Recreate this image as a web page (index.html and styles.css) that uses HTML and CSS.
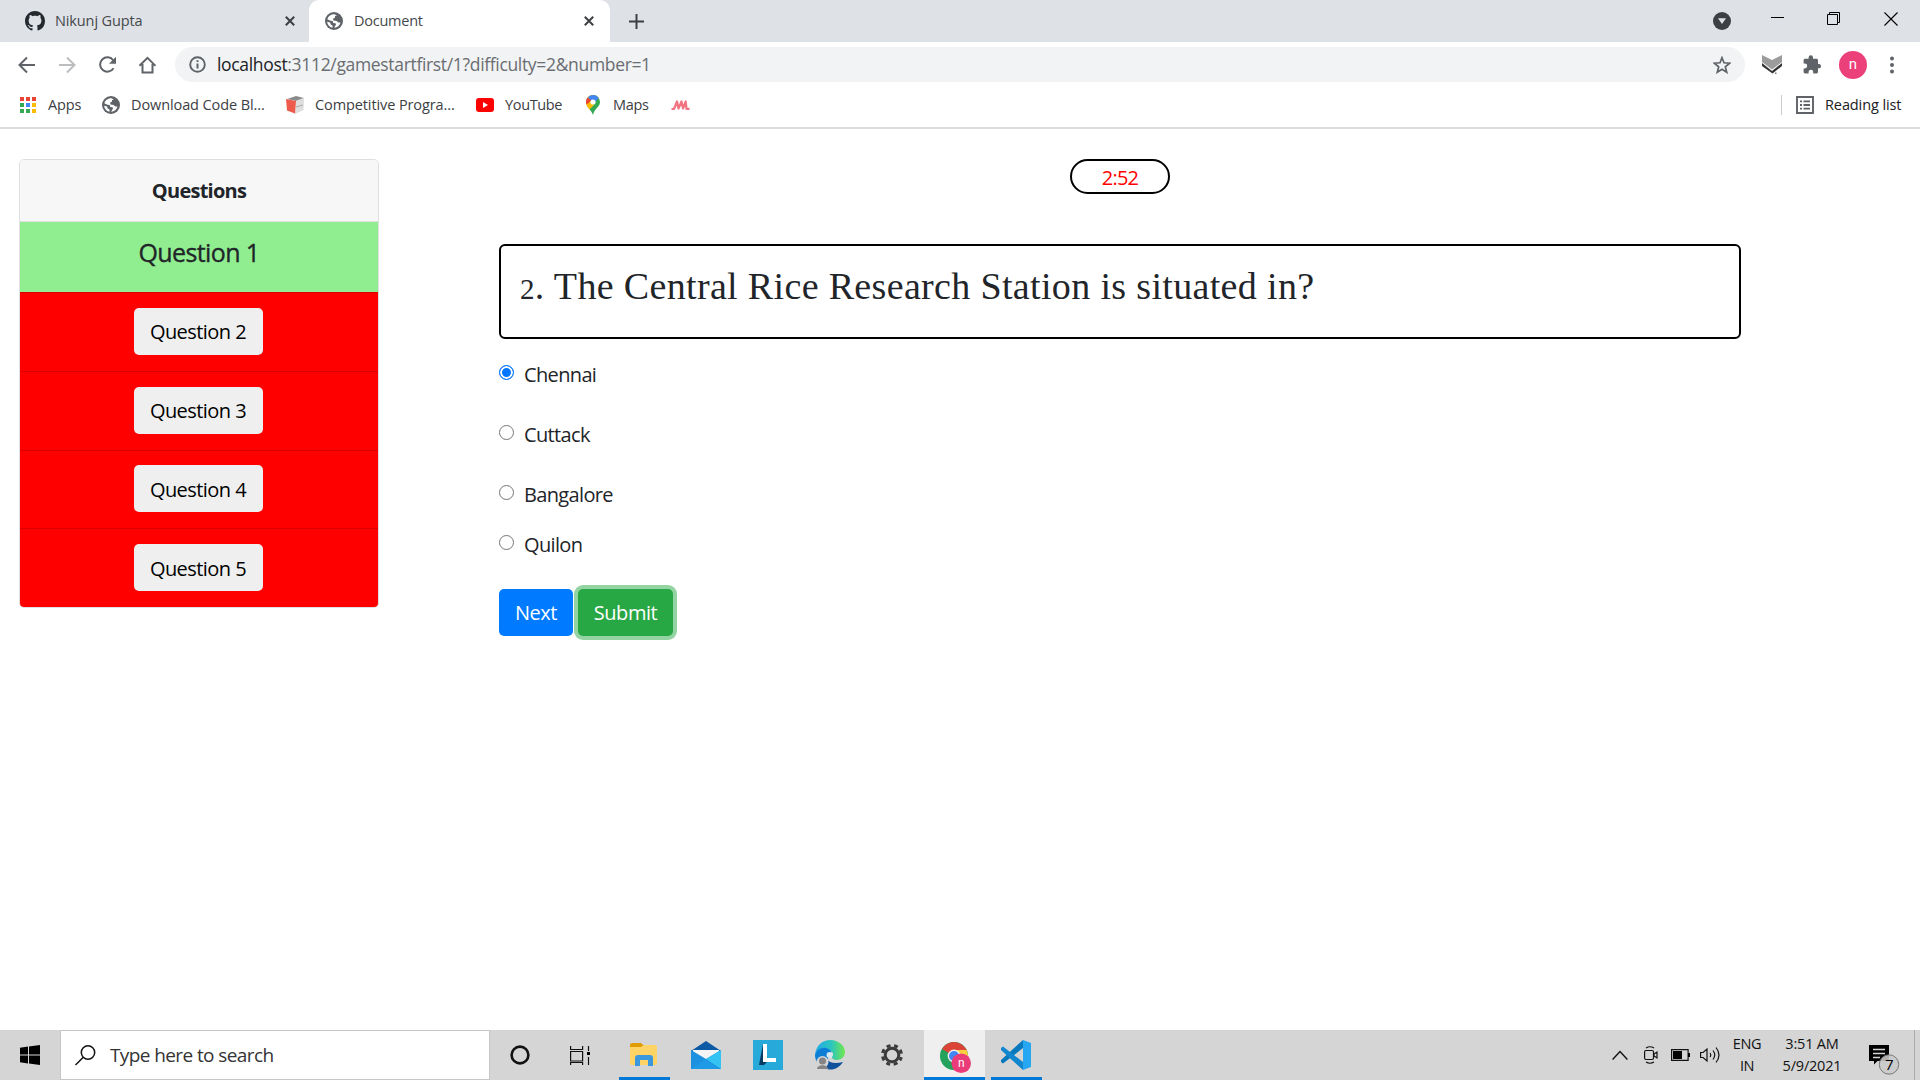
FILE: index.html
```html
<!DOCTYPE html>
<html lang="en">
<head>
<meta charset="utf-8">
<title>Document</title>
<link rel="stylesheet" href="styles.css">
</head>
<body>
<svg class="defs" width="0" height="0">
  <symbol id="globe" viewBox="0 0 18 18"><circle cx="9" cy="9" r="9" fill="#5f6368"/><path d="M8 2.2C5 3 3 4.500 2.300 7.300l3.200 1.500 2.200.2.600 1.900 2.200.4.500 1.300-1.900 3.200c3.400-.3 5.700-2.500 6.400-5.400l-2.200.2-1.700-1.600-3.100-.6-.4-1.900 1.800-.7.200-1.700 1.800-.5C11 2.700 9.500 2.100 8 2.200zM2.100 9.700c.2 2.800 2.400 5.300 5.300 6l.3-1.900-2-1.400-.6-1.800z" fill="#fff"/></symbol>
  <symbol id="cross" viewBox="0 0 10 10"><path d="M.8.8l8.400 8.400M9.200.8L.8 9.200" stroke="#3c4043" stroke-width="2"/></symbol>
</svg>

<header class="browser">
  <div class="tabs">
    <div class="tab tab-idle">
      <svg class="github" width="20" height="20" viewBox="0 0 16 16"><path fill="#24292e" d="M8 0C3.580 0 0 3.580 0 8c0 3.540 2.290 6.530 5.470 7.590.4.070.55-.17.55-.38 0-.19-.01-.82-.01-1.490-2.010.37-2.530-.49-2.690-.94-.09-.23-.48-.94-.82-1.130-.28-.15-.68-.52-.01-.53.63-.01 1.080.58 1.230.82.72 1.210 1.870.87 2.330.66.070-.52.28-.87.51-1.070-1.780-.2-3.640-.89-3.640-3.950 0-.87.31-1.590.82-2.150-.08-.2-.36-1.020.08-2.120 0 0 .67-.21 2.200.82.64-.18 1.320-.27 2-.27s1.360.09 2 .27c1.530-1.040 2.200-.82 2.200-.82.44 1.100.16 1.920.08 2.120.51.56.82 1.270.82 2.150 0 3.070-1.870 3.750-3.650 3.950.29.25.54.73.54 1.480 0 1.070-.01 1.930-.01 2.200 0 .21.15.46.55.38A8.010 8.010 0 0016 8c0-4.420-3.580-8-8-8z"/></svg>
      <span class="tab-title tab-title-github">Nikunj Gupta</span>
      <svg width="10" height="10"><use href="#cross"/></svg>
    </div>
    <div class="tab tab-active">
      <svg width="18" height="18"><use href="#globe"/></svg>
      <span class="tab-title">Document</span>
      <svg width="10" height="10"><use href="#cross"/></svg>
    </div>
    <svg class="new-tab" width="15" height="15" viewBox="0 0 15 15"><path d="M7.500 0v15M0 7.500h15" stroke="#3c4043" stroke-width="2"/></svg>
    <div class="window-controls">
      <svg width="18" height="18" viewBox="0 0 18 18"><circle cx="9" cy="9" r="9" fill="#3c4043"/><path d="M5 6.200h8L9 12z" fill="#dee1e6"/></svg>
      <svg class="minimize" width="13" height="13" viewBox="0 0 13 13"><path d="M0 5.500h13" stroke="#000"/></svg>
      <svg class="restore" width="13" height="13" viewBox="0 0 13 13"><path d="M.5 2.500h10v10H.5zM2.500 2.500v-2h10v10h-2" fill="none" stroke="#000"/></svg>
      <svg class="close" width="14" height="14" viewBox="0 0 14 14"><path d="M.5.5l13 13M13.500.5l-13 13" stroke="#000" stroke-width="1.100"/></svg>
    </div>
  </div>

  <div class="toolbar">
    <div class="nav">
      <svg width="18" height="18" viewBox="0 0 18 18"><path d="M17 9H2M9 1.500L1.500 9 9 16.500" fill="none" stroke="#5f6368" stroke-width="2"/></svg>
      <svg width="18" height="18" viewBox="0 0 18 18"><path d="M1 9h15M9 1.500L16.500 9 9 16.500" fill="none" stroke="#bbbdbf" stroke-width="2"/></svg>
      <svg width="18" height="18" viewBox="0 0 18 18"><path d="M15.500 12.200A7.200 7.200 0 1 1 15.300 4.500" fill="none" stroke="#5f6368" stroke-width="2"/><path d="M18 .8v7h-7z" fill="#5f6368"/></svg>
      <svg width="18" height="18" viewBox="0 0 18 18"><path d="M1.500 9.800L9.500 1.800l8 8M4.500 8v8.500h10V8" fill="none" stroke="#5f6368" stroke-width="2"/></svg>
    </div>
    <div class="omnibox">
      <svg width="17" height="17" viewBox="0 0 17 17"><circle cx="8.500" cy="8.500" r="7.300" fill="none" stroke="#5f6368" stroke-width="1.900"/><path d="M8.500 7.400v5M8.500 4.200v1.900" stroke="#5f6368" stroke-width="2"/></svg>
      <span class="url"><b>localhost</b>:3112/gamestartfirst/1?difficulty=2&amp;number=1</span>
      <svg width="18" height="18" viewBox="0 0 18 18"><path d="M9 1.700l2 5.100 5.600.4-4.300 3.600 1.400 5.400L9 13.200l-4.700 3 1.400-5.400L1.400 7.200 7 6.800z" fill="none" stroke="#5f6368" stroke-width="1.700"/></svg>
    </div>
    <svg class="extension" width="20" height="20" viewBox="0 0 20 20"><path d="M0 8l10 8L20 8v3l-9.500 7.500L0 11z" fill="#333"/><path d="M0 0l10 5 10-5v7l-10 7.500L0 7z" fill="#9c9c9c"/><path d="M13 17.500h1.500V19H13z" fill="#777"/></svg>
    <svg class="puzzle" width="19" height="19" viewBox="0 0 19 19"><path fill="#5f6368" d="M16.300 9H15V5.300C15 4.300 14.400 3.700 13.500 3.700H10V2.400a2.200 2.200 0 0 0-4.400 0v1.300H2.200C1.300 3.700.6 4.400.6 5.300v3.300h1.200a2.400 2.400 0 0 1 0 4.800H.6v3.400c0 .9.700 1.600 1.600 1.600h3.400v-1.300a2.300 2.300 0 0 1 4.600 0v1.300h3.300c.9 0 1.500-.7 1.500-1.600v-3.500h1.300A2.200 2.200 0 0 0 16.300 9z"/></svg>
    <span class="avatar">n</span>
    <svg class="dots" width="4" height="18" viewBox="0 0 4 18"><g fill="#5f6368"><circle cx="2" cy="2.500" r="2"/><circle cx="2" cy="9" r="2"/><circle cx="2" cy="15.500" r="2"/></g></svg>
  </div>

  <nav class="bookmarks">
    <span class="bookmark bm-apps"><svg width="16" height="16" viewBox="0 0 16 16"><path fill="#ea4335" d="M0 0h4v4H0zM6 0h4v4H6zM12 0h4v4h-4z"/><path fill="#34a853" d="M0 6h4v4H0zM0 12h4v4H0zM6 12h4v4H6z"/><path fill="#4285f4" d="M6 6h4v4H6z"/><path fill="#fbbc04" d="M12 6h4v4h-4zM12 12h4v4h-4z"/></svg>Apps</span>
    <span class="bookmark bm-code"><svg width="18" height="18"><use href="#globe"/></svg>Download Code Bl...</span>
    <span class="bookmark bm-prog"><svg width="18" height="18" viewBox="0 0 18 18"><path d="M1 3l9-3 8 2-8 3z" fill="#8b8b8b"/><path d="M10 5l8-3-.500 12L9 18z" fill="#dedede"/><path d="M0 3l10 2-1 12.500L1 14.500z" fill="#ee5b4d"/><path d="M10 11l7-2" stroke="#aaa"/></svg>Competitive Progra...</span>
    <span class="bookmark bm-tube"><svg width="18" height="14" viewBox="0 0 18 14"><rect width="18" height="14" rx="3" fill="#f00"/><path d="M7 4l5 3-5 3z" fill="#fff"/></svg>YouTube</span>
    <span class="bookmark bm-maps"><svg width="14" height="20" viewBox="0 0 14 20"><path d="M7 0a7 7 0 0 1 7 7c0 5-5.500 6-7 13C5.500 15 0 12 0 7a7 7 0 0 1 7-7z" fill="#34a853"/><path d="M1.300 11L12.800 3A7 7 0 0 0 2 2.200L0 7c0 1.500.5 2.800 1.300 4z" fill="#fbbc04"/><path d="M2 2.200A7 7 0 0 1 12.800 3L7 9z" fill="#4285f4"/><path d="M1.700 2.500L7 7l-4.500 3.500L.3 9C-.5 6.500.3 4 1.700 2.500z" fill="#ea4335"/><path d="M.5 9.500L5 6l3 4-4.600 4.400C2 12.800.9 11.200.5 9.500z" fill="#fbbc04"/><circle cx="7" cy="7" r="2.600" fill="#fff"/></svg>Maps</span>
    <svg width="19" height="12" viewBox="0 0 19 12"><path d="M.5 10h2.500L6 2.500 7.500 9.500 10.500 2.500 12 9.500 14.700 2.500 15.500 9.800H18.500" fill="none" stroke="#f27480" stroke-width="2.200" stroke-linejoin="round"/></svg>
    <span class="reading"><svg width="18" height="18" viewBox="0 0 18 18"><path d="M1 1h16v16H1z" fill="none" stroke="#5f6368" stroke-width="1.900"/><path d="M4 5.300h2M7.500 5.300H14M4 9h2M7.500 9H14M4 12.700h2M7.500 12.700H14" stroke="#5f6368" stroke-width="1.800"/></svg>Reading list</span>
  </nav>
</header>

<main class="page">
  <aside class="card">
    <div class="card-header">Questions</div>
    <div class="row row-done">Question 1</div>
    <div class="row"><button class="question-btn">Question 2</button></div>
    <div class="row"><button class="question-btn">Question 3</button></div>
    <div class="row"><button class="question-btn">Question 4</button></div>
    <div class="row"><button class="question-btn">Question 5</button></div>
  </aside>
  <section class="quiz">
    <div class="timer">2:52</div>
    <h3 class="prompt"><span class="oldstyle">2</span>. The Central Rice Research Station is situated in?</h3>
    <div class="options">
      <label class="option"><i class="radio checked"></i>Chennai</label>
      <label class="option"><i class="radio"></i>Cuttack</label>
      <label class="option option-tight"><i class="radio"></i>Bangalore</label>
      <label class="option"><i class="radio"></i>Quilon</label>
    </div>
    <div class="actions">
      <button class="btn btn-next">Next</button>
      <button class="btn btn-submit">Submit</button>
    </div>
  </section>
</main>

<footer class="taskbar">
  <div class="start"><svg width="20" height="20" viewBox="0 0 20 20"><path d="M0 2.800L8 1.600v7.900H0zM9 1.500L20 0v9.500H9zM0 10.500h8v7.900l-8-1.200zM9 10.500h11V20L9 18.500z"/></svg></div>
  <div class="search">
    <svg width="21" height="21" viewBox="0 0 21 21"><circle cx="13" cy="7.500" r="6.700" fill="none" stroke="#111" stroke-width="1.500"/><path d="M8.300 12.300L.5 20" stroke="#111" stroke-width="1.500"/></svg>
    <span>Type here to search</span>
  </div>
  <div class="apps">
    <div class="app w60"><svg width="20" height="20" viewBox="0 0 20 20"><circle cx="10" cy="10" r="8.400" fill="none" stroke="#111" stroke-width="2.600"/></svg></div>
    <div class="app w60"><svg width="20" height="19" viewBox="0 0 20 19"><path d="M.6 0v3.500h12V0M.6 5.500h12v9.500H.6zM.6 19v-2.500h12V19M18.500 0v5M18.500 11v8" fill="none" stroke="#111" stroke-width="1.200"/><path d="M17 6h3v3h-3z"/></svg></div>
    <div class="app w69"><div class="underlined"><svg width="28" height="24" viewBox="0 0 28 24"><path d="M0 2a2 2 0 0 1 2-2h9l3 3-2 3H0z" fill="#e09c00"/><path d="M0 4h11l3-2h11a2 2 0 0 1 2 2v16a2 2 0 0 1-2 2H2a2 2 0 0 1-2-2z" fill="#ffd366"/><path d="M5 23V15a3 3 0 0 1 3-3h12a3 3 0 0 1 3 3v8h-5v-6h-8v6z" fill="#3c98dc"/></svg></div></div>
    <div class="app mail"><svg width="30" height="28" viewBox="0 0 30 28"><path d="M0 10L15 0l15 10v3H0z" fill="#0c59a4"/><path d="M2 9h26v12H2z" fill="#f5f5f5"/><path d="M0 9l15 9 15-9v19H0z" fill="#1d90df"/><path d="M15 18l15-9v19z" fill="#35c3f3"/><path d="M15 18l13 10H0z" fill="#1e9ae6"/></svg></div>
    <div class="app w69"><svg width="30" height="30" viewBox="0 0 30 30"><path d="M0 0h30v30H0z" fill="#27a9d9"/><path d="M10 4L6 25h5l4-4z" fill="#083a66"/><path d="M10 4h4v14h9v4H10z" fill="#fff"/></svg></div>
    <div class="app w55"><svg width="30" height="30" viewBox="0 0 30 30"><defs><linearGradient id="edge-top" x1="0" x2="1"><stop offset="0" stop-color="#21a9e8"/><stop offset=".55" stop-color="#2cc5bd"/><stop offset="1" stop-color="#71e84d"/></linearGradient></defs><path d="M0 15C1 5 8 0 15 0c9 0 15 6 15 12 0 5-4 8-8 8-3 0-5-1-5-3 1-2 2-3 0-5C13 8 4 9 0 15z" fill="url(#edge-top)"/><path d="M0 15C2 9 9 5 15 10c3 3 0 4-1 7l-7 10C2 24 0 19 0 15z" fill="#0d7ed6"/><path d="M12 19c2 4 8 5 16 3-4 6-10 9-16 7-3-2-4-7 0-10z" fill="#11529d"/><circle cx="7.500" cy="22" r="6" fill="#d5d5d5"/><circle cx="7.500" cy="21" r="3.500" fill="#858585"/><path d="M2 29c0-5 11-5 11 0z" fill="#858585"/><circle cx="14.500" cy="15" r="3" fill="#d9e7ee"/></svg></div>
    <div class="app w69"><svg width="22" height="22" viewBox="0 0 22 22"><circle cx="11" cy="11" r="6.800" fill="none" stroke="#3b3b3b" stroke-width="3"/><circle cx="11" cy="11" r="9.500" fill="none" stroke="#3b3b3b" stroke-width="3" stroke-dasharray="4 3.460" stroke-dashoffset="2" transform="rotate(22.500 11 11)"/></svg></div>
    <div class="app chrome"><svg width="31" height="31" viewBox="0 0 31 31"><circle cx="14" cy="14" r="14" fill="#24a15b"/><path d="M14 14L1.900 7A14 14 0 0 1 26.100 7L27 9H14z" fill="#db4437"/><path d="M14 8h12.600A14 14 0 0 1 14 28l6-11z" fill="#ffcd40"/><circle cx="14" cy="14" r="6.400" fill="#f1f1f1"/><circle cx="14" cy="14" r="5" fill="#4285f4"/><circle cx="21.200" cy="21.200" r="9.800" fill="#e93c78"/><text x="21.200" y="24.800" class="chrome-n" text-anchor="middle">n</text></svg></div>
    <div class="app code"><svg width="30" height="30" viewBox="0 0 30 30"><path d="M22 0L0 20v2l2 1.500L22 8z" fill="#0879bd"/><path d="M22 30L0 10V8l2-1.500L22 22z" fill="#1287cf"/><path d="M22 0l8 3v24l-8 3z" fill="#27a7f2"/></svg></div>
  </div>
  <div class="tray">
    <svg width="16" height="10" viewBox="0 0 16 10"><path d="M.6 9.400L8 1.500l7.400 7.900" fill="none" stroke="#111" stroke-width="1.400"/></svg>
    <svg class="camera" width="15" height="18" viewBox="0 0 15 18"><path d="M2 2q4-2.500 8 0M2 16q4 2.500 8 0M2 4.500h6a1.500 1.500 0 0 1 1.500 1.500v6A1.500 1.500 0 0 1 8 13.500H2A1.500 1.500 0 0 1 .6 12V6A1.500 1.500 0 0 1 2 4.500zM10 8l3-2v6L10 10z" fill="none" stroke="#111" stroke-width="1.200"/></svg>
    <svg class="battery" width="19" height="12" viewBox="0 0 19 12"><path d="M.6.6h16.500v10.800H.6z" fill="none" stroke="#111" stroke-width="1.200"/><path d="M2 2h9v8H2zM17 4h2v4h-2z"/></svg>
    <svg class="volume" width="21" height="18" viewBox="0 0 21 18"><path d="M.6 6.500h2.500L7 3v12l-3.900-3.500H.6zM10 7q1.500 2 0 4M13 4.500q3.500 4.500 0 9M16 1.500q6 7.500 0 15" fill="none" stroke="#111" stroke-width="1.200"/></svg>
    <div class="lang"><span>ENG</span><span>IN</span></div>
    <div class="clock"><span>3:51 AM</span><span>5/9/2021</span></div>
    <svg class="notice" width="31" height="31" viewBox="0 0 31 31"><path d="M0 0h20v16H8.500L5 19.500V16H0z"/><path d="M4 4.500h12M4 8.500h12M4 12.500h7" stroke="#d5d5d5" stroke-width="1.300"/><circle cx="20" cy="19.500" r="9.700" fill="#c9c9c9" fill-opacity=".88" stroke="#777"/><text x="20" y="25" class="notice-n" text-anchor="middle">7</text></svg>
    <i class="desktop-edge"></i>
  </div>
</footer>
</body>
</html>
```
FILE: styles.css
```css
* { box-sizing: border-box; }
body {
  margin: 0;
  width: 1920px;
  height: 1080px;
  overflow: hidden;
  display: flex;
  flex-direction: column;
  background: #fff;
  color: #212529;
  font-family: "Open Sans", "Noto Sans", sans-serif;
}
svg { display: block; flex: none; }
.defs { position: absolute; }
button { border: 0; font-family: inherit; }

/* Browser chrome */
.browser { height: 129px; border-bottom: 2px solid #dadce0; white-space: nowrap; }
.tabs { display: flex; height: 42px; background: #dee1e6; }
.tab { display: flex; align-items: center; font-size: 14.5px; color: #45484c; }
.tab-idle { width: 309px; padding: 0 14px 0 25px; }
.tab-active { width: 301px; padding: 0 16px; background: #fff; border-radius: 10px 10px 0 0; }
.tab-title { flex: 1; margin-left: 11px; padding-bottom: 2px; letter-spacing: -.25px; }
.tab-title-github { margin-left: 10px; letter-spacing: -.12px; }
.new-tab { margin: 14px 0 0 19px; }
.window-controls { display: flex; margin-left: auto; padding: 12px 22px 0 0; }
.minimize { margin-left: 40px; }
.restore { margin-left: 43px; }
.close { margin-left: 44px; }

.toolbar { display: flex; align-items: center; height: 45px; }
.nav { display: flex; gap: 22px; width: 175px; padding-left: 18px; }
.omnibox { display: flex; align-items: center; width: 1570px; height: 35px; padding: 0 14px; border-radius: 18px; background: #f1f3f4; }
.url { flex: 1; margin-left: 11px; padding-bottom: 1px; font-size: 17.5px; letter-spacing: -.33px; color: #6a6d71; }
.url b { font-weight: 400; color: #202124; }
.extension { margin-left: 17px; }
.puzzle { margin-left: 21px; }
.avatar { width: 28px; height: 28px; margin-left: 17px; border-radius: 50%; background: #ec407a; color: #fff; font: 15px/26px Roboto, sans-serif; text-align: center; }
.dots { margin-left: 23px; }

.bookmarks { display: flex; align-items: center; height: 36px; padding-left: 20px; font-size: 14.5px; line-height: 18px; letter-spacing: -.1px; color: #3c4043; }
.bookmark { display: flex; align-items: center; gap: 11px; }
.bm-apps { width: 82px; gap: 12px; }
.bm-code { width: 184px; }
.bm-prog { width: 190px; }
.bm-tube { width: 110px; letter-spacing: -.35px; }
.bm-maps { width: 85px; gap: 13px; letter-spacing: -.35px; }
.reading { display: flex; align-items: center; gap: 11px; width: 139px; height: 20px; margin-left: auto; padding-left: 14px; border-left: 1px solid #c9cbce; color: #202124; }

/* Quiz page */
.page { display: flex; flex: 1; padding: 30px 0 0 19px; font-size: 20px; }
.card { width: 360px; height: 449px; border: 1px solid #dfdfdf; border-radius: 5px; overflow: hidden; text-align: center; letter-spacing: -.4px; }
.card-header { height: 62px; border-bottom: 1px solid #dfdfdf; background: #f7f7f7; font-weight: 700; line-height: 61px; letter-spacing: -.75px; }
.row { display: flex; justify-content: center; height: 78.750px; padding: 14.800px 2px 0 0; background: red; border-top: 1px solid #d90000; }
.row-done { height: 70px; padding: 13px 0 0; border: 0; background: #90ee90; font-size: 25px; font-weight: 500; line-height: 34px; letter-spacing: -.6px; -webkit-text-stroke: .35px #212529; }
.question-btn { width: 129px; height: 47px; padding: 1px 0 0; border-radius: 5px; background: #efefef; font-size: 20px; letter-spacing: -.55px; }
.quiz { width: 1242px; margin-left: 120px; }
.timer { width: 100px; height: 35px; margin: 0 auto; border: 2px solid #000; border-radius: 20px; color: red; line-height: 33px; text-align: center; letter-spacing: -.8px; }
.prompt { height: 95px; margin: 50px 0 0; padding: 15px 19px; border: 2px solid #000; border-radius: 6px; font: 400 38px/50px "Liberation Serif", serif; letter-spacing: .34px; white-space: nowrap; }
.oldstyle { font-size: 29px; }
.options { padding-top: 20px; }
.option { display: flex; height: 60px; padding-top: 3px; line-height: 25px; letter-spacing: -.65px; }
.option-tight { height: 50px; }
.radio { width: 15px; height: 15px; margin: 3px 10px 0 0; border: 1px solid #767676; border-radius: 50%; }
.checked { border: 1.500px solid #0075ff; background: #0075ff; box-shadow: inset 0 0 0 2px #fff; }
.actions { display: flex; gap: 5px; }
.btn { height: 47px; padding: 0 0 1px; border-radius: 5px; color: #fff; font-size: 20px; letter-spacing: -.45px; }
.btn-next { width: 74px; background: #007bff; }
.btn-submit { width: 95px; background: #28a745; box-shadow: 0 0 0 4px #94d3a2; }

/* Windows taskbar */
.taskbar { display: flex; height: 50px; background: #d5d5d5; }
.start { width: 60px; padding: 15px 0 0 20px; }
.search { display: flex; align-items: center; gap: 14px; width: 430px; padding-left: 14px; border: 1px solid #c6c6c6; background: #fff; color: #333; font-size: 19px; letter-spacing: -.6px; }
.apps { display: flex; }
.app { display: flex; align-items: center; justify-content: center; }
.w60 { width: 60px; }
.w69 { width: 69px; }
.w55 { width: 55px; }
.mail { width: 54px; padding-right: 1px; }
.underlined { display: flex; align-items: center; justify-content: center; width: 51px; height: 50px; border-bottom: 3px solid #0078d7; padding: 3px 1px 0 0; }
.chrome { width: 61px; margin-left: -2px; padding: 7px 0 0 2px; border-bottom: 3px solid #0078d7; background: #efefef; }
.code { width: 51px; margin-left: 6px; padding: 3px 1px 0 0; border-bottom: 3px solid #0078d7; }
.chrome-n { fill: #fff; font: 12px Roboto, sans-serif; }
.tray { display: flex; align-items: center; margin-left: auto; color: #111; font-size: 14.5px; line-height: 22px; letter-spacing: -.4px; }
.camera { margin-left: 16px; }
.battery { margin-left: 12px; }
.volume { margin-left: 10px; }
.lang, .clock { display: flex; flex-direction: column; align-items: center; white-space: nowrap; }
.lang { width: 40px; margin-left: 6px; }
.clock { width: 80px; margin-left: 5px; letter-spacing: -.2px; }
.notice { margin: 10px 0 0 17px; }
.notice-n { font: 15px "Open Sans", sans-serif; }
.desktop-edge { width: 6px; height: 50px; margin-left: 14px; border-left: 1px solid #aaa; }
```
